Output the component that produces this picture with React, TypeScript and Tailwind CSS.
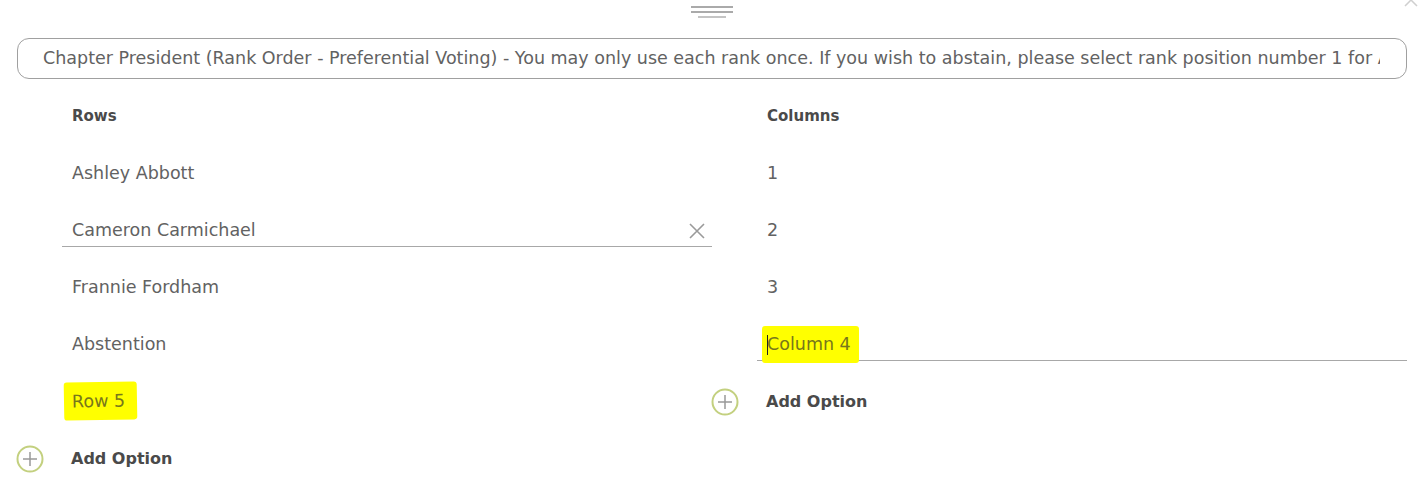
import { ReactNode } from 'react';

const font = { fontFamily: '"DejaVu Sans", "Liberation Sans", sans-serif' };

function PlusCircle() {
  return (
    <svg width="28" height="28" viewBox="0 0 28 28" fill="none">
      <circle cx="14" cy="14" r="12.5" stroke="#c3d07f" strokeWidth="2" />
      <path d="M14 7v14M7 14h14" stroke="#999" strokeWidth="1.5" />
    </svg>
  );
}

function ClearIcon() {
  return (
    <svg width="18" height="18" viewBox="0 0 18 18" fill="none">
      <path d="M2 2l14 14M16 2L2 16" stroke="#9a9a9a" strokeWidth="1.6" />
    </svg>
  );
}

function Row({ children }: { children: ReactNode }) {
  return <div className="h-[57px] flex items-center pl-[55px]">{children}</div>;
}

function EditRow({ children, icon }: { children: ReactNode; icon?: boolean }) {
  return (
    <div className="h-[57px] flex items-center pl-[45px]">
      <div className="flex-1 h-[32px] mt-[1px] flex items-center justify-between pl-[10px] pr-[6px] border-b border-[#a8a8a8]">
        {children}
        {icon && <ClearIcon />}
      </div>
    </div>
  );
}

function AddOption() {
  return (
    <div className="h-[57px] flex items-center">
      <div className="w-[55px] flex items-center -ml-[1px]">
        <PlusCircle />
      </div>
      <span className="font-bold text-[16px] text-[#4a4a4a]">Add Option</span>
    </div>
  );
}

export default function App() {
  return (
    <div className="relative w-[1424px] h-[483px] bg-white overflow-hidden text-[17.5px] text-[#626262]" style={font}>
      {/* close */}
      <div className="absolute -top-[8px] right-[5px]">
        <svg width="16" height="16" viewBox="0 0 16 16" fill="none">
          <path d="M2 2l12 12M14 2L2 14" stroke="#cfcfcf" strokeWidth="1.5" />
        </svg>
      </div>

      {/* drag handle */}
      <div className="h-[38px] flex justify-center pt-[6px]">
        <div className="flex flex-col items-center gap-[3px]">
          <div className="w-[42px] h-[2px] bg-[#aaa]" />
          <div className="w-[42px] h-[2px] bg-[#aaa]" />
          <div className="w-[28px] h-[2px] bg-[#c4c4c4]" />
        </div>
      </div>

      <div className="px-[17px]">
        <div className="h-[41px] border border-[#a0a0a0] rounded-[12px] flex items-center pl-[25px] pr-[26px] whitespace-nowrap">
          <span className="min-w-0 overflow-hidden">
            Chapter President (Rank Order - Preferential Voting) - You may only use each rank once. If you wish to abstain, please select rank position number 1 for Abstention
          </span>
        </div>

        <div className="grid grid-cols-2 mt-[9px]">
          <div>
            <Row><span className="font-bold text-[#4a4a4a] text-[15px]">Rows</span></Row>
            <Row>Ashley Abbott</Row>
            <EditRow icon>Cameron Carmichael</EditRow>
            <Row>Frannie Fordham</Row>
            <Row>Abstention</Row>
            <div className="h-[57px] flex items-center pl-[47px]">
              <span className="bg-[#ffff00] text-[#77771c] pl-[8px] pr-[12px] py-[6px] rounded-[3px] -rotate-1">Row 5</span>
            </div>
            <AddOption />
          </div>
          <div>
            <Row><span className="font-bold text-[#4a4a4a] text-[15px]">Columns</span></Row>
            <Row>1</Row>
            <Row>2</Row>
            <Row>3</Row>
            <EditRow>
              <span className="relative -ml-[5px] bg-[#ffff00] text-[#77771c] pl-[5px] pr-[8px] py-[5px] rounded-[3px]">
                <span className="inline-block w-[1px] h-[20px] bg-[#222] align-middle -mr-[1px]" />
                Column 4
              </span>
            </EditRow>
            <AddOption />
          </div>
        </div>
      </div>
    </div>
  );
}
